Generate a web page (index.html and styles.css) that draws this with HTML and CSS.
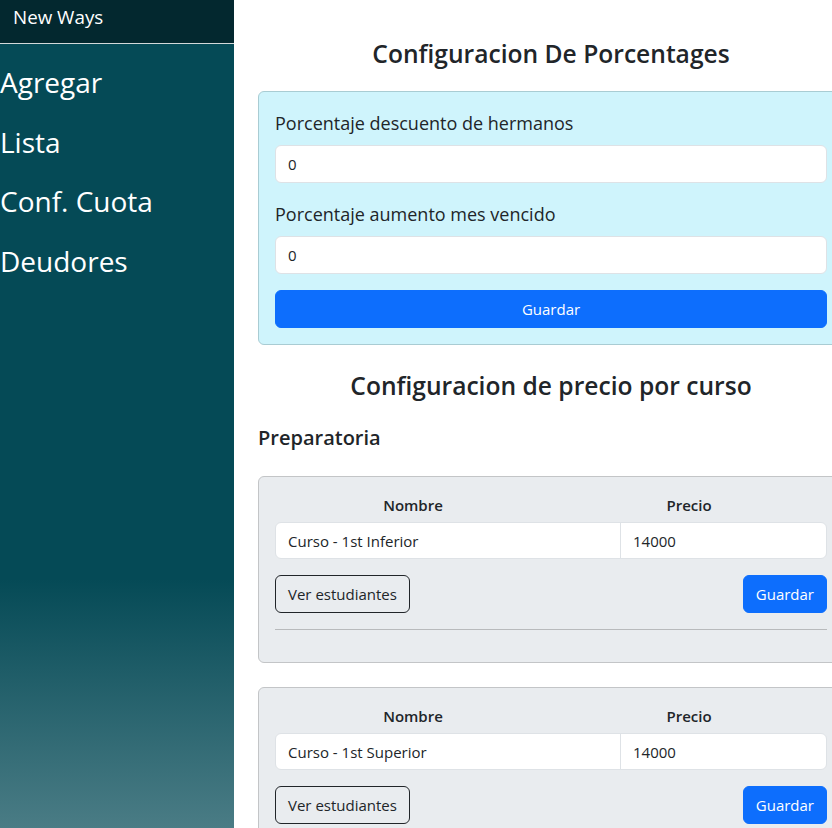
FILE: index.html
```html
<!DOCTYPE html>
<html lang="es">
<head>
<meta charset="utf-8">
<title>New Ways</title>
<link rel="stylesheet" href="styles.css">
</head>
<body>
<div class="page">
  <aside class="sidebar">
    <div class="topbar"><span class="brand">New Ways</span></div>
    <nav class="nav">
      <a class="nav-link" href="#">Agregar</a>
      <a class="nav-link" href="#">Lista</a>
      <a class="nav-link" href="#">Conf. Cuota</a>
      <a class="nav-link" href="#">Deudores</a>
    </nav>
  </aside>
  <main class="content">
    <h3 class="title title-first">Configuracion De Porcentages</h3>
    <div class="card card-info">
      <label class="form-label">Porcentaje descuento de hermanos</label>
      <input class="form-control mb" type="text" value="0">
      <label class="form-label">Porcentaje aumento mes vencido</label>
      <input class="form-control mb" type="text" value="0">
      <button class="btn btn-primary btn-block">Guardar</button>
    </div>

    <h3 class="title title-second">Configuracion de precio por curso</h3>
    <h4 class="subtitle">Preparatoria</h4>

    <div class="card card-grey">
      <div class="head-row"><span>Nombre</span><span>Precio</span></div>
      <div class="data-row">
        <div class="cell cell-name">Curso - 1st Inferior</div>
        <div class="cell cell-price">14000</div>
      </div>
      <div class="actions">
        <button class="btn btn-outline">Ver estudiantes</button>
        <button class="btn btn-primary">Guardar</button>
      </div>
      <hr class="divider">
    </div>

    <div class="card card-grey">
      <div class="head-row"><span>Nombre</span><span>Precio</span></div>
      <div class="data-row">
        <div class="cell cell-name">Curso - 1st Superior</div>
        <div class="cell cell-price">14000</div>
      </div>
      <div class="actions">
        <button class="btn btn-outline">Ver estudiantes</button>
        <button class="btn btn-primary">Guardar</button>
      </div>
      <hr class="divider">
    </div>
  </main>
</div>
</body>
</html>
```
FILE: styles.css
```css
html, body {
  margin: 0;
  padding: 0;
  overflow: hidden;
  height: 100%;
}
body {
  font-family: "Open Sans", "Noto Sans", sans-serif;
  color: #212529;
  background: #fff;
  font-size: 16px;
}
.page {
  display: flex;
  min-height: 828px;
}
.sidebar {
  width: 234px;
  flex-shrink: 0;
  height: 828px;
  display: flex;
  flex-direction: column;
  background: linear-gradient(180deg, #054a56 70%, #4a7c85 100%);
}
.topbar {
  height: 43px;
  background: #03282f;
  border-bottom: 1px solid #d4d9da;
  display: flex;
  align-items: center;
  padding-left: 13px;
  box-sizing: content-box;
}
.brand {
  color: #fff;
  font-size: 18.8px;
  line-height: 1;
  margin-top: -8px;
}
.nav {
  display: flex;
  flex-direction: column;
  padding-top: 9px;
}
.nav-link {
  color: #fff;
  text-decoration: none;
  font-size: 28px;
  height: 59.7px;
  line-height: 59.7px;
}
.content {
  width: 586px;
  flex-shrink: 0;
  padding: 38px 24px 0;
}
.title {
  font-size: 24.6px;
  font-weight: 600;
  line-height: 31px;
  text-align: center;
  margin: 0;
}
.title-first { margin-bottom: 22px; }
.title-second { margin-top: 25px; margin-bottom: 23px; }
.subtitle {
  font-size: 20px;
  font-weight: 600;
  line-height: 28px;
  margin: 0 0 24px;
}
.card {
  border-radius: 6px;
  padding: 16px;
  box-sizing: border-box;
}
.card-info {
  background: #cff4fc;
  border: 1px solid #a9ccd3;
}
.card-grey {
  background: #e9ecef;
  border: 1px solid #c3c5c7;
  margin-bottom: 24px;
}
.form-label {
  display: block;
  font-size: 18px;
  line-height: 30px;
  margin-bottom: 7px;
}
.form-control {
  display: block;
  width: 100%;
  box-sizing: border-box;
  height: 38px;
  padding: 6px 12px;
  font: inherit;
  font-size: 15px;
  color: #212529;
  background: #fff;
  border: 1px solid #dee2e6;
  border-radius: 6px;
}
.mb { margin-bottom: 16px; }
.btn {
  font: inherit;
  font-size: 15px;
  height: 38px;
  padding: 0 12px;
  border-radius: 6px;
  cursor: pointer;
}
.btn-primary {
  background: #0d6efd;
  border: 1px solid #0d6efd;
  color: #fff;
}
.btn-block {
  display: block;
  width: 100%;
}
.btn-outline {
  background: transparent;
  border: 1px solid #212529;
  color: #212529;
}
.head-row {
  display: grid;
  grid-template-columns: 1fr 1fr;
  text-align: center;
  font-weight: 600;
  font-size: 15px;
  line-height: 24px;
  margin-bottom: 5px;
}
.data-row {
  display: flex;
  height: 37px;
  background: #fff;
  border: 1px solid #dee2e6;
  border-radius: 6px;
  box-sizing: border-box;
  margin-bottom: 16px;
}
.cell {
  display: flex;
  align-items: center;
  padding-left: 12px;
  font-size: 15px;
}
.cell-name {
  width: 345px;
  box-sizing: border-box;
  border-right: 1px solid #dee2e6;
}
.cell-price { flex: 1; }
.actions {
  display: flex;
  justify-content: space-between;
}
.divider {
  border: 0;
  border-top: 1px solid #b8babc;
  margin: 16px 0 16px;
}
```
